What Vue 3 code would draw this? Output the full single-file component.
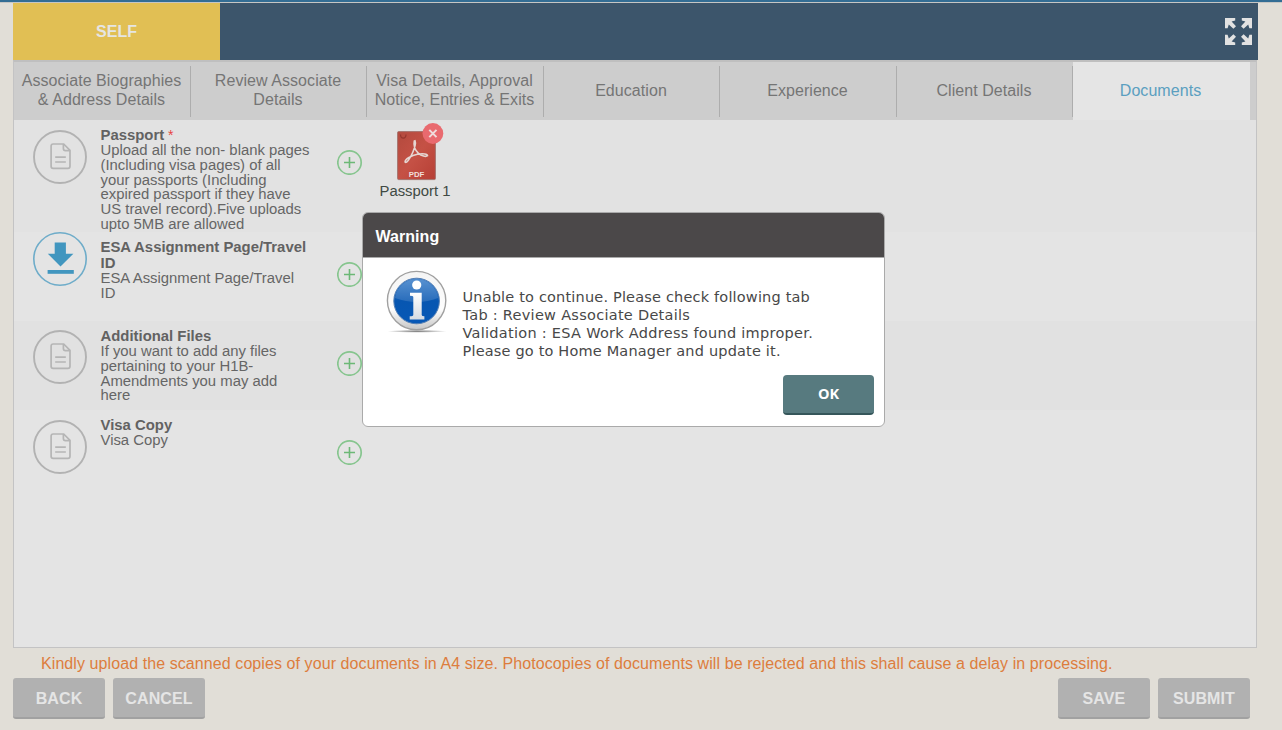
<script setup>
const tabs = [
  { lines: ['Associate Biographies', '& Address Details'] },
  { lines: ['Review Associate', 'Details'] },
  { lines: ['Visa Details, Approval', 'Notice, Entries & Exits'] },
  { lines: ['Education'] },
  { lines: ['Experience'] },
  { lines: ['Client Details'] },
  { lines: ['Documents'], active: true }
]
const docs = [
  {
    key: 'passport', title: ['Passport'], required: true, file: 'Passport 1',
    text: ['Upload all the non- blank pages', '(Including visa pages) of all', 'your passports (Including', 'expired passport if they have', 'US travel record).Five uploads', 'upto 5MB are allowed']
  },
  { key: 'esa', title: ['ESA Assignment Page/Travel', 'ID'], download: true, text: ['ESA Assignment Page/Travel', 'ID'] },
  { key: 'additional', title: ['Additional Files'], text: ['If you want to add any files', 'pertaining to your H1B-', 'Amendments you may add', 'here'] },
  { key: 'visa', title: ['Visa Copy'], text: ['Visa Copy'] }
]
const message = [
  'Unable to continue. Please check following tab',
  'Tab : Review Associate Details',
  'Validation : ESA Work Address found improper.',
  'Please go to Home Manager and update it.'
]
</script>

<template>
  <div class="page">
    <div class="topline"></div>
    <header class="bar">
      <div class="self">SELF</div>
      <svg class="expand" width="27" height="27" viewBox="0 0 27 27">
        <g fill="#e2e2e2">
          <path d="M0 0H10.2V2.4L6.6 3.6L11 8.2L8.4 10.8L3.8 6.4L2.6 10.2H0Z" />
          <path d="M27 0H16.8V2.4L20.4 3.6L16 8.2L18.6 10.8L23.2 6.4L24.4 10.2H27Z" />
          <path d="M0 27H10.2V24.6L6.6 23.4L11 18.8L8.4 16.2L3.8 20.6L2.6 16.8H0Z" />
          <path d="M27 27H16.8V24.6L20.4 23.4L16 18.8L18.6 16.2L23.2 20.6L24.4 16.8H27Z" />
        </g>
      </svg>
    </header>
    <main class="panel">
      <nav class="tabs">
        <div v-for="t in tabs" :key="t.lines[0]" class="tab" :class="{ active: t.active }">
          <span v-for="l in t.lines" :key="l">{{ l }}</span>
        </div>
      </nav>
      <section v-for="d in docs" :key="d.key" class="row" :class="d.key">
        <svg v-if="d.download" class="round" width="54" height="54" viewBox="0 0 54 54">
          <circle cx="27" cy="27" r="26.2" fill="none" stroke="#6eacc9" stroke-width="1.6" />
          <path d="M21.7 10.5H32.9V21.7H40.4L27.5 34.6L14.8 21.7H21.7Z" fill="#4196bf" />
          <rect x="14.6" y="38" width="26.2" height="3.8" fill="#4196bf" />
        </svg>
        <svg v-else class="round" width="54" height="54" viewBox="0 0 54 54">
          <circle cx="27" cy="27" r="26" fill="none" stroke="#b2b2b2" stroke-width="1.9" />
          <g fill="none" stroke="#b5b5b5" stroke-width="1.7">
            <path d="M20.2 14H30.7L37 20.3V36.2Q37 38.3 34.9 38.3H20.2Q18.1 38.3 18.1 36.2V16.1Q18.1 14 20.2 14Z" />
            <path d="M30.4 14V18.6Q30.4 20.7 32.5 20.7H37" />
            <path d="M22.2 27.1H32.8M22.2 32H32.8" />
          </g>
        </svg>
        <div class="info">
          <div class="title">
            <span v-for="l in d.title" :key="l">{{ l }}<i v-if="d.required"> *</i></span>
          </div>
          <div class="desc"><span v-for="l in d.text" :key="l">{{ l }}</span></div>
        </div>
        <svg class="plus" width="26" height="26" viewBox="0 0 26 26">
          <circle cx="12.5" cy="13.5" r="11.7" fill="none" stroke="#86c58e" stroke-width="1.7" />
          <path d="M7 13.5H18M12.5 8V19" stroke="#6cb876" stroke-width="1.6" />
        </svg>
        <div v-if="d.file" class="file">
          <svg width="52" height="58" viewBox="0 0 52 58">
            <defs>
              <linearGradient id="red" x1="0" y1="0" x2="1" y2="1">
                <stop offset="0" stop-color="#b34a3e" />
                <stop offset=".5" stop-color="#c55145" />
                <stop offset="1" stop-color="#b63f35" />
              </linearGradient>
            </defs>
            <rect x="3.6" y="8.6" width="37.8" height="48" rx="1" fill="url(#red)" stroke="#a5746f" />
            <path d="M6.5 11.5Q6.5 15 9.3 15.2Q12 15 12 11.5" fill="none" stroke="#96372e" stroke-width="1.2" />
            <path d="M20.3 18C19.3 23 21.4 27.5 24.5 30.3C27.5 33.2 32 34 33.5 32.7C34 31 29 30.2 23.4 31.3C17.6 32.4 10.8 36 11.1 39C12.6 41.2 16.5 34.3 18.7 29.5C20.5 25.4 22.2 20.4 21 17.7Z" fill="none" stroke="#e5d6d2" stroke-width="1.6" />
            <text x="22.5" y="53.8" text-anchor="middle" class="pdf">PDF</text>
            <circle cx="38.9" cy="10.5" r="10.4" fill="#e96a6f" />
            <path d="M35.3 6.9L42.5 14.1M42.5 6.9L35.3 14.1" stroke="#f0dddd" stroke-width="2" />
          </svg>
          <span>{{ d.file }}</span>
        </div>
      </section>
    </main>
    <p class="note">Kindly upload the scanned copies of your documents in A4 size. Photocopies of documents will be rejected and this shall cause a delay in processing.</p>
    <footer class="actions">
      <button>BACK</button>
      <button>CANCEL</button>
      <button class="push">SAVE</button>
      <button>SUBMIT</button>
    </footer>

    <div class="dialog">
      <div class="dhead">Warning</div>
      <div class="dbody">
        <svg class="badge" width="62" height="64" viewBox="0 0 62 64">
          <defs>
            <linearGradient id="ring" x1="0" y1="0" x2="0" y2="1">
              <stop offset="0" stop-color="#f4f4f4" />
              <stop offset=".65" stop-color="#fdfdfd" />
              <stop offset="1" stop-color="#c6c6c6" />
            </linearGradient>
            <linearGradient id="blue" x1="0" y1="0" x2="0" y2="1">
              <stop offset="0" stop-color="#3f81ca" />
              <stop offset=".5" stop-color="#0756b1" />
              <stop offset="1" stop-color="#0758b6" />
            </linearGradient>
            <linearGradient id="letter" x1="0" y1="0" x2="0" y2="1">
              <stop offset="0" stop-color="#ffffff" />
              <stop offset="1" stop-color="#d5dbe2" />
            </linearGradient>
            <radialGradient id="shade">
              <stop offset="0" stop-color="#777" />
              <stop offset="1" stop-color="#777" stop-opacity="0" />
            </radialGradient>
          </defs>
          <ellipse cx="31" cy="61.3" rx="30" ry="1.5" fill="url(#shade)" />
          <circle cx="30.6" cy="30.6" r="29.2" fill="url(#ring)" stroke="#a0a0a0" stroke-width="1.4" />
          <circle cx="30.6" cy="31" r="22.8" fill="url(#blue)" stroke="#5680b4" stroke-width="1" />
          <path d="M9 28A21.8 21.8 0 0 1 52.2 28Q31 36 9 28Z" fill="#fff" opacity=".14" />
          <circle cx="30.7" cy="15" r="4.6" fill="#fff" />
          <path d="M24 22.7H35.7V45Q35.7 46.3 38.4 46.3V49.6H23.7V46.3Q27.3 46.3 27.3 44.8V27Q27.3 25.7 24 25.7Z" fill="url(#letter)" />
        </svg>
        <div class="msg"><span v-for="l in message" :key="l">{{ l }}</span></div>
      </div>
      <button class="ok">OK</button>
    </div>
  </div>
</template>

<style>
html, body { margin: 0; background: #e1ded7; overflow: hidden; }
</style>

<style scoped>
* { box-sizing: border-box; }
.page { position: relative; width: 1282px; height: 730px; background: #e1ded7; font-family: "Liberation Sans", Arial, sans-serif; overflow: hidden; white-space: nowrap; }
.topline { height: 3px; background: #336d94; border-bottom: 1px solid #c6c6c4; }
.bar { display: flex; justify-content: space-between; margin-left: 13px; width: 1245px; height: 57px; background: #3c556b; }
.self { width: 207px; line-height: 57px; text-align: center; font-weight: bold; font-size: 16px; color: #e5e5e3; background: #e1bf54; }
.expand { margin: 15px 6px 0 0; }
.panel { margin-left: 13px; width: 1244px; height: 588px; background: #e4e4e4; border: 1px solid #c3c3c4; border-top: 2px solid #bfbfbf; }
.tabs { display: flex; height: 58px; background: #cdcdcd; }
.tab { position: relative; width: 176.5px; display: flex; flex-direction: column; align-items: center; justify-content: center; font-size: 16px; letter-spacing: .06px; line-height: 19px; color: #757575; padding: 0 1.5px 2px 0; }
.tab:not(.active)::after { content: ""; position: absolute; right: 0; top: 4px; width: 1px; height: 51px; background: #adadad; }
.tab.active { background: #e5e5e5; color: #5b9fc0; }
.row { display: flex; align-items: flex-start; height: 89px; padding-left: 19px; }
.row.passport { height: 112px; background: #e2e2e2; }
.row.additional { background: #e1e1e1; }
.round { margin-top: 10px; }
.esa .round { margin-top: 0; }
.additional .round { margin-top: 9px; }
.info { width: 236px; margin-left: 13.5px; padding-top: 7px; color: #666; }
.title span, .desc span, .msg span { display: block; }
.title { font-weight: bold; font-size: 14.88px; line-height: 16px; color: #626262; }
.title i { font: 14px/12px "Liberation Sans", Arial, sans-serif; color: #e8453f; }
.desc { font-size: 14.87px; line-height: 14.75px; }
.plus { margin-top: 29px; }
.file { display: flex; flex-direction: column; align-items: center; width: 80px; margin-left: 12.5px; padding-top: 3px; font-size: 14.87px; line-height: 20px; color: #404a44; }
.file svg { margin-left: 9px; }
.pdf { font: bold 7.8px "Liberation Sans", Arial, sans-serif; fill: #f1dfdc; }
.note { margin: 6px 0 0 41px; font-size: 16px; letter-spacing: .083px; line-height: 20px; color: #dd7d3d; }
.actions { display: flex; gap: 8px; margin: 4px 32px 0 13px; }
.actions button { width: 92px; height: 41px; padding: 2px 0 0; border: 0; border-bottom: 2px solid #a1a1a1; border-radius: 3px; background: #b1b1b1; color: #e5e5e5; font: bold 16px "Liberation Sans", Arial, sans-serif; letter-spacing: .1px; }
.actions .push { margin-left: auto; }
.dialog { position: absolute; left: 362px; top: 212px; width: 523px; height: 215px; background: #fff; border: 1px solid #aaa; border-radius: 6px; display: flex; flex-direction: column; overflow: hidden; }
.dhead { height: 45px; padding: 1px 0 0 12.5px; line-height: 45px; background: #4b4849; border-bottom: 1px solid #aaa; color: #fff; font-weight: bold; font-size: 16px; letter-spacing: .05px; }
.dbody { display: flex; height: 117px; padding: 12px 0 0 23px; }
.msg { margin: 18px 0 0 14.5px; font-family: "DejaVu Sans", Verdana, sans-serif; font-size: 14.5px; letter-spacing: .18px; line-height: 18px; color: #484848; }
.msg span:nth-child(2), .msg span:nth-child(3) { letter-spacing: .28px; }
.ok { align-self: flex-end; margin-right: 10px; width: 91px; height: 40px; padding: 0 0 2px; border: 0; border-bottom: 2px solid #35565a; border-radius: 4px; background: #577a7f; color: #fff; font: bold 14.5px "Open Sans", sans-serif; }
</style>
